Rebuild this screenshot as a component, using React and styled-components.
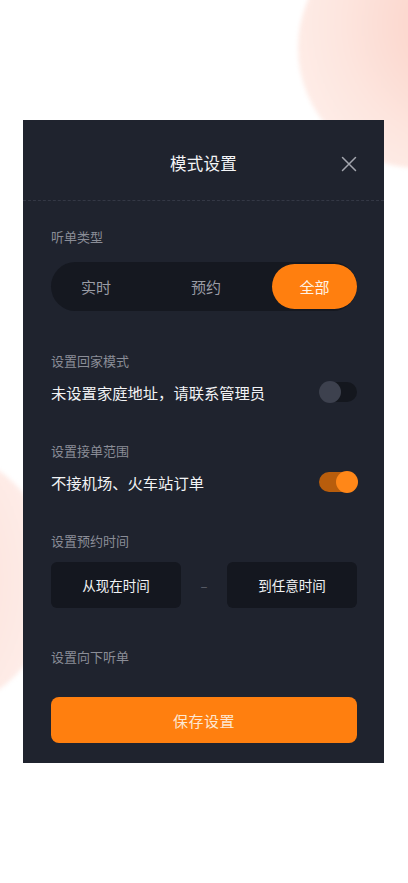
import React, { useState } from 'react';
import styled, { createGlobalStyle } from 'styled-components';

const GlobalStyle = createGlobalStyle`
  html, body {
    margin: 0;
    padding: 0;
    background: #ffffff;
  }
  body {
    font-family: "Noto Sans CJK SC", "Noto Sans", sans-serif;
    -webkit-font-smoothing: antialiased;
  }
  * {
    box-sizing: border-box;
  }
`;

const Page = styled.div`
  position: relative;
  width: 408px;
  height: 883px;
  overflow: hidden;
  background: #ffffff;
  padding-top: 120px;
  padding-left: 23px;
`;

const Blob = styled.div`
  position: absolute;
  border-radius: 50%;
  pointer-events: none;
  background: ${(p) => p.$bg};
  width: ${(p) => p.$size}px;
  height: ${(p) => p.$size}px;
  left: ${(p) => p.$x}px;
  top: ${(p) => p.$y}px;
  filter: blur(2px);
`;

const Panel = styled.div`
  position: relative;
  width: 361px;
  background: #1f232e;
  color: #ffffff;
`;

const Header = styled.div`
  position: relative;
  height: 81px;
  padding-top: 5px;
  display: flex;
  align-items: center;
  justify-content: center;
  border-bottom: 1px dashed #343845;
`;

const Title = styled.div`
  font-size: 16.5px;
  letter-spacing: 0.3px;
  color: #f4f5f7;
`;

const Close = styled.button`
  position: absolute;
  right: 27px;
  top: 36px;
  width: 16px;
  height: 16px;
  padding: 0;
  border: 0;
  background: none;
  cursor: pointer;
  display: flex;
`;

const Body = styled.div`
  padding: 27px 27px 20px 28px;
  display: flex;
  flex-direction: column;
`;

const Label = styled.div`
  font-size: 13px;
  line-height: 18px;
  color: #8a8d97;
  margin-top: ${(p) => p.$mt || 0}px;
`;

const Segment = styled.div`
  margin-top: 16px;
  height: 49px;
  border-radius: 25px;
  background: #151820;
  display: flex;
  padding: 2px 1px;
`;

const SegItem = styled.button`
  flex: 0 0 ${(p) => p.$w}px;
  border: 0;
  border-radius: 23px;
  font-family: inherit;
  font-size: 15px;
  cursor: pointer;
  background: ${(p) => (p.$active ? '#ff7f0f' : 'transparent')};
  color: ${(p) => (p.$active ? '#fff3e6' : '#9a9ca5')};
`;

const Row = styled.div`
  margin-top: 10px;
  height: 24px;
  display: flex;
  align-items: center;
  justify-content: space-between;
`;

const RowText = styled.div`
  font-size: 15.3px;
  color: #f2f3f5;
`;

const Toggle = styled.button`
  position: relative;
  width: 38px;
  height: 20px;
  border: 0;
  padding: 0;
  cursor: pointer;
  border-radius: 10px;
  background: ${(p) => (p.$on ? '#b85d0c' : '#14171e')};
`;

const Knob = styled.span`
  position: absolute;
  top: -1px;
  left: ${(p) => (p.$on ? '17px' : '0')};
  width: 22px;
  height: 22px;
  border-radius: 50%;
  background: ${(p) => (p.$on ? '#ff8718' : '#3d414e')};
`;

const TimeRow = styled.div`
  margin-top: 12px;
  display: flex;
  align-items: center;
  justify-content: space-between;
`;

const TimeBox = styled.button`
  width: 130px;
  height: 46px;
  border: 0;
  border-radius: 6px;
  background: #14171f;
  color: #f2f3f5;
  font-family: inherit;
  font-size: 13.5px;
  cursor: pointer;
`;

const Dash = styled.span`
  color: #5e626d;
  font-size: 13px;
`;

const SaveButton = styled.button`
  margin-top: 31px;
  height: 46px;
  border: 0;
  border-radius: 8px;
  background: #ff7f0f;
  color: #fde8d3;
  font-family: inherit;
  font-size: 15px;
  letter-spacing: 0.5px;
  cursor: pointer;
`;

const types = [
  { key: 'now', label: '实时', w: 88 },
  { key: 'book', label: '预约', w: 132 },
  { key: 'all', label: '全部', w: 85 },
];

export default function App() {
  const [type, setType] = useState('all');
  const [home, setHome] = useState(false);
  const [noAirport, setNoAirport] = useState(true);

  return (
    <>
      <GlobalStyle />
      <Page>
        <Blob $bg="radial-gradient(circle at 70% 40%, #fbcdc2 0%, #fde5de 55%, #fff3ef 100%)" $size={240} $x={298} $y={-72} />
        <Blob $bg="radial-gradient(circle at 20% 50%, #fbd0c6 0%, #fde6e0 60%, #fff3f0 100%)" $size={270} $x={-215} $y={445} />
        <Panel>
          <Header>
            <Title>模式设置</Title>
            <Close aria-label="关闭">
              <svg width="16" height="16" viewBox="0 0 16 16" fill="none">
                <path d="M1.5 1.5L14.5 14.5M14.5 1.5L1.5 14.5" stroke="#a3a6ae" strokeWidth="1.5" strokeLinecap="round" />
              </svg>
            </Close>
          </Header>
          <Body>
            <Label>听单类型</Label>
            <Segment>
              {types.map((t) => (
                <SegItem key={t.key} $w={t.w} $active={type === t.key} onClick={() => setType(t.key)}>
                  {t.label}
                </SegItem>
              ))}
            </Segment>

            <Label $mt={41}>设置回家模式</Label>
            <Row>
              <RowText>未设置家庭地址，请联系管理员</RowText>
              <Toggle $on={home} onClick={() => setHome(!home)}>
                <Knob $on={home} />
              </Toggle>
            </Row>

            <Label $mt={38}>设置接单范围</Label>
            <Row>
              <RowText>不接机场、火车站订单</RowText>
              <Toggle $on={noAirport} onClick={() => setNoAirport(!noAirport)}>
                <Knob $on={noAirport} />
              </Toggle>
            </Row>

            <Label $mt={38}>设置预约时间</Label>
            <TimeRow>
              <TimeBox>从现在时间</TimeBox>
              <Dash>–</Dash>
              <TimeBox>到任意时间</TimeBox>
            </TimeRow>

            <Label $mt={40}>设置向下听单</Label>
            <SaveButton>保存设置</SaveButton>
          </Body>
        </Panel>
      </Page>
    </>
  );
}
